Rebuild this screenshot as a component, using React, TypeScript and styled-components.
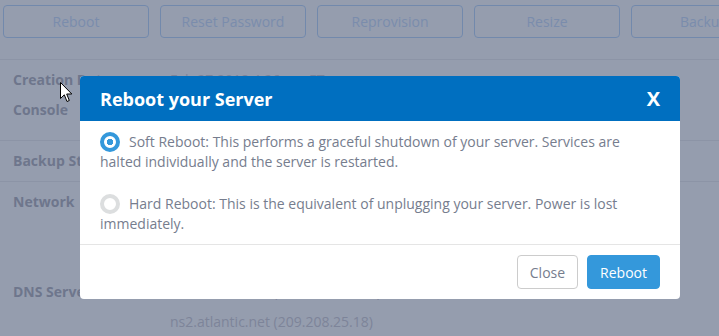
import React from "react";
import styled, { createGlobalStyle } from "styled-components";

const Global = createGlobalStyle`
  html, body { margin: 0; padding: 0; background: #ffffff; }
  body { font-family: "Open Sans", "Liberation Sans", sans-serif; overflow: hidden; }
  * { box-sizing: border-box; }
`;

const Page = styled.div`
  position: relative;
  width: 719px;
  height: 336px;
  overflow: hidden;
  background: #ffffff;
`;

const Toolbar = styled.div`
  display: flex;
  gap: 11px;
  padding: 5px 0 0 3px;
  height: 60px;
  border-bottom: 1px solid #ececef;
  white-space: nowrap;
`;

const ToolButton = styled.div`
  flex: 0 0 146px;
  height: 33px;
  border: 1px solid #b9d6fb;
  border-radius: 4px;
  color: #c9ddfb;
  font-size: 14px;
  display: flex;
  align-items: center;
  justify-content: center;
`;

const Section = styled.div<{ $top: number; $bottom: number }>`
  padding: ${(p) => p.$top}px 0 ${(p) => p.$bottom}px 13px;
  border-bottom: 1px solid #ececef;
`;

const Row = styled.div`
  display: grid;
  grid-template-columns: 157px 1fr;
  line-height: 30px;
  font-size: 14px;
`;

const Label = styled.div`
  font-weight: 700;
  color: #b1b1bb;
  white-space: nowrap;
`;

const Values = styled.div`
  color: #cfcdd5;
  white-space: nowrap;
`;

const Overlay = styled.div`
  position: absolute;
  inset: 0;
  background: rgba(43, 59, 93, 0.5);
`;

const Modal = styled.div`
  position: absolute;
  left: 80px;
  top: 76px;
  width: 600px;
  background: #ffffff;
  border-radius: 4px;
  overflow: hidden;
`;

const ModalHeader = styled.div`
  height: 45px;
  background: #006fc0;
  display: flex;
  align-items: center;
  justify-content: space-between;
  padding: 0 20px;
  color: #ffffff;
`;

const Title = styled.h3`
  margin: 0;
  font-size: 18px;
  font-weight: 700;
`;

const CloseX = styled.span`
  font-size: 20px;
  font-weight: 700;
  line-height: 1;
`;

const ModalBody = styled.div`
  padding: 11px 20px 10px;
  border-bottom: 1px solid #e5e5e5;
  display: flex;
  flex-direction: column;
  gap: 22px;
`;

const Option = styled.p`
  margin: 0;
  font-size: 14px;
  line-height: 20px;
  color: #767d8e;
`;

const Radio = styled.span<{ $checked?: boolean }>`
  display: inline-block;
  width: 20px;
  height: 20px;
  border-radius: 50%;
  vertical-align: top;
  margin-right: 9px;
  border: 4px solid ${(p) => (p.$checked ? "#3498db" : "#dcdedf")};
  background: ${(p) =>
    p.$checked
      ? "radial-gradient(circle, #3498db 0 3px, #ffffff 3.5px)"
      : "#ffffff"};
`;

const ModalFooter = styled.div`
  display: flex;
  justify-content: flex-end;
  gap: 9px;
  padding: 10px 20px 10px;
`;

const Button = styled.button<{ $primary?: boolean }>`
  height: 34px;
  padding: 0 12px;
  border-radius: 4px;
  font-family: inherit;
  font-size: 14px;
  border: 1px solid ${(p) => (p.$primary ? "#3498db" : "#cccccc")};
  background: ${(p) => (p.$primary ? "#3498db" : "#ffffff")};
  color: ${(p) => (p.$primary ? "#ffffff" : "#767d8e")};
`;

const Cursor = styled.svg`
  position: absolute;
  left: 60px;
  top: 82px;
`;

export default function App() {
  return (
    <>
      <Global />
      <Page>
        <Toolbar>
          <ToolButton>Reboot</ToolButton>
          <ToolButton>Reset Password</ToolButton>
          <ToolButton>Reprovision</ToolButton>
          <ToolButton>Resize</ToolButton>
          <ToolButton>Backup</ToolButton>
        </Toolbar>
        <Section $top={5} $bottom={15}>
          <Row>
            <Label>Creation Date</Label>
            <Values>Feb 27 2018 4:26 pm ET</Values>
          </Row>
          <Row>
            <Label>Console</Label>
            <Values>Launch Console</Values>
          </Row>
        </Section>
        <Section $top={5} $bottom={5}>
          <Row>
            <Label>Backup Status</Label>
            <Values>Disabled</Values>
          </Row>
        </Section>
        <Section $top={5} $bottom={5}>
          <Row>
            <Label>Network</Label>
            <Values>
              <div>Public IP</div>
              <div>Private IP</div>
              <div>Gateway</div>
            </Values>
          </Row>
          <Row>
            <Label>DNS Servers</Label>
            <Values>
              <div>ns1.atlantic.net (209.208.127.65)</div>
              <div>ns2.atlantic.net (209.208.25.18)</div>
            </Values>
          </Row>
        </Section>
        <Overlay />
        <Modal>
          <ModalHeader>
            <Title>Reboot your Server</Title>
            <CloseX>X</CloseX>
          </ModalHeader>
          <ModalBody>
            <Option>
              <Radio $checked />
              Soft Reboot: This performs a graceful shutdown of your server. Services are
              halted individually and the server is restarted.
            </Option>
            <Option>
              <Radio />
              Hard Reboot: This is the equivalent of unplugging your server. Power is lost
              immediately.
            </Option>
          </ModalBody>
          <ModalFooter>
            <Button>Close</Button>
            <Button $primary>Reboot</Button>
          </ModalFooter>
        </Modal>
        <Cursor width="13" height="21" viewBox="0 0 13 21">
          <path
            d="M0.5 0.5 L0.5 16.5 L4.3 12.8 L7 19.5 L9.3 18.5 L6.7 12 L11.8 12 Z"
            fill="#ffffff"
            stroke="#000000"
            strokeWidth="1"
            strokeLinejoin="miter"
          />
        </Cursor>
      </Page>
    </>
  );
}
